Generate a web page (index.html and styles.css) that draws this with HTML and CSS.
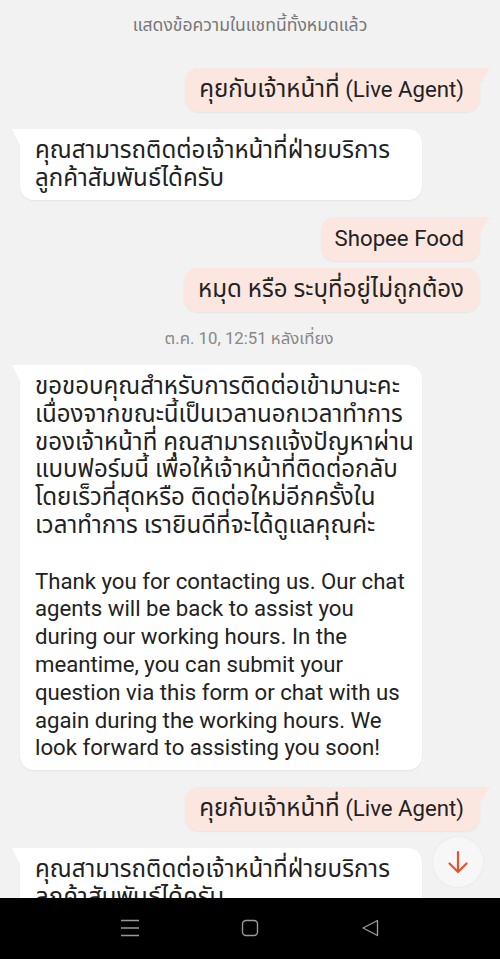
FILE: index.html
```html
<!DOCTYPE html>
<html lang="th">
<head>
<meta charset="utf-8">
<title>Chat</title>
<link rel="stylesheet" href="styles.css">
</head>
<body>
<div class="chat">
  <div class="notice">แสดงข้อความในแชทนี้ทั้งหมดแล้ว</div>

  <div class="row me"><div class="bubble out tail"><span class="th">คุยกับเจ้าหน้าที่</span> (Live Agent)</div></div>
  <div class="row bot"><div class="bubble in tail"><span class="th">คุณสามารถติดต่อเจ้าหน้าที่ฝ่ายบริการ<br>ลูกค้าสัมพันธ์ได้ครับ</span></div></div>
  <div class="row me"><div class="bubble out tail">Shopee Food</div></div>
  <div class="row me close"><div class="bubble out"><span class="th">หมุด หรือ ระบุที่อยู่ไม่ถูกต้อง</span></div></div>

  <div class="stamp">ต.ค. 10, 12:51 หลังเที่ยง</div>

  <div class="row bot"><div class="bubble in tail"><span class="th">ขอขอบคุณสำหรับการติดต่อเข้ามานะคะ<br>เนื่องจากขณะนี้เป็นเวลานอกเวลาทำการ<br>ของเจ้าหน้าที่ คุณสามารถแจ้งปัญหาผ่าน<br>แบบฟอร์มนี้ เพื่อให้เจ้าหน้าที่ติดต่อกลับ<br>โดยเร็วที่สุดหรือ ติดต่อใหม่อีกครั้งใน<br>เวลาทำการ เรายินดีที่จะได้ดูแลคุณค่ะ</span><br><br>Thank you for contacting us. Our chat<br>agents will be back to assist you<br>during our working hours. In the<br>meantime, you can submit your<br>question via this form or chat with us<br>again during the working hours. We<br>look forward to assisting you soon!</div></div>

  <div class="row me"><div class="bubble out tail"><span class="th">คุยกับเจ้าหน้าที่</span> (Live Agent)</div></div>
  <div class="row bot"><div class="bubble in tail"><span class="th">คุณสามารถติดต่อเจ้าหน้าที่ฝ่ายบริการ<br>ลูกค้าสัมพันธ์ได้ครับ</span></div></div>
</div>

<button class="scroll-down" aria-label="Scroll down">
  <svg width="24" height="24" viewBox="0 0 24 24"><path d="M12 2v20M3.5 13.5L12 22l8.5-8.5" fill="none" stroke="#e8522f" stroke-width="2.2" stroke-linecap="round" stroke-linejoin="round"/></svg>
</button>

<nav class="navbar">
  <svg class="nav-icon" width="20" height="20" viewBox="0 0 20 20"><path d="M1 2.5h18M1 10h18M1 17.5h18" stroke="#9a9a9a" stroke-width="1.3" fill="none"/></svg>
  <svg class="nav-icon" width="20" height="20" viewBox="0 0 20 20"><rect x="2.5" y="2.5" width="15" height="15" rx="3.5" stroke="#9a9a9a" stroke-width="1.4" fill="none"/></svg>
  <svg class="nav-icon" width="20" height="20" viewBox="0 0 20 20"><path d="M17.5 2.5v15L3 10z" stroke="#9a9a9a" stroke-width="1.4" stroke-linejoin="round" fill="none"/></svg>
</nav>
</body>
</html>
```

FILE: styles.css
```css
* { box-sizing: border-box; }
html, body { margin: 0; padding: 0; }
body {
  background: #f2f2f2;
  font-family: Roboto, "Noto Sans Thai", "Noto Sans", sans-serif;
  color: #222;
  width: 500px;
  height: 959px;
  overflow: hidden;
  position: relative;
}
.chat {
  display: flex;
  flex-direction: column;
  padding: 12px 0 0;
}
.notice {
  text-align: center;
  color: #777;
  font-size: 17.6px;
  line-height: 26px;
  height: 56px;
}
.stamp {
  text-align: center;
  color: #888;
  font-size: 16.8px;
  line-height: 22px;
  margin: 15px 0 16px;
  padding-right: 2px;
}
.row { display: flex; margin-top: 17px; }
.notice + .row, .stamp + .row { margin-top: 0; }
.row.close { margin-top: 7px; }
.me { justify-content: flex-end; padding-right: 20px; }
.bot { justify-content: flex-start; padding-left: 20px; }
.bubble {
  position: relative;
  font-size: 22.2px;
  line-height: 27.8px;
  padding: 8px 16px 8px 15px;
  border-radius: 14px;
  white-space: nowrap;
  box-shadow: 0 1px 2px rgba(0,0,0,0.06);
}
.th { font-size: 24.1px; }
.bubble.out { background: #fce6e0; padding: 8px 16px 8px 14px; }
.bubble.in { background: #fff; width: 402px; }
.bubble.out.tail { border-top-right-radius: 0; }
.bubble.in.tail { border-top-left-radius: 0; }
.bubble.out.tail::after {
  content: "";
  position: absolute;
  top: 0;
  right: -10px;
  width: 0; height: 0;
  border-top: 16px solid #fce6e0;
  border-right: 10px solid transparent;
}
.bubble.in.tail::before {
  content: "";
  position: absolute;
  top: 0;
  left: -8px;
  width: 0; height: 0;
  border-top: 16px solid #fff;
  border-left: 8px solid transparent;
}
.scroll-down {
  position: absolute;
  left: 433px;
  top: 837px;
  width: 50px;
  height: 50px;
  border-radius: 50%;
  border: none;
  background: #f7f7f7;
  box-shadow: 0 0 3px rgba(0,0,0,0.06);
  display: flex;
  align-items: center;
  justify-content: center;
  padding: 0;
}
.navbar {
  position: absolute;
  left: 0; right: 0; bottom: 0;
  height: 61px;
  background: #000;
  display: flex;
  justify-content: center;
  align-items: center;
  gap: 100px;
  padding-bottom: 1px;
}
.nav-icon { display: block; }
```
